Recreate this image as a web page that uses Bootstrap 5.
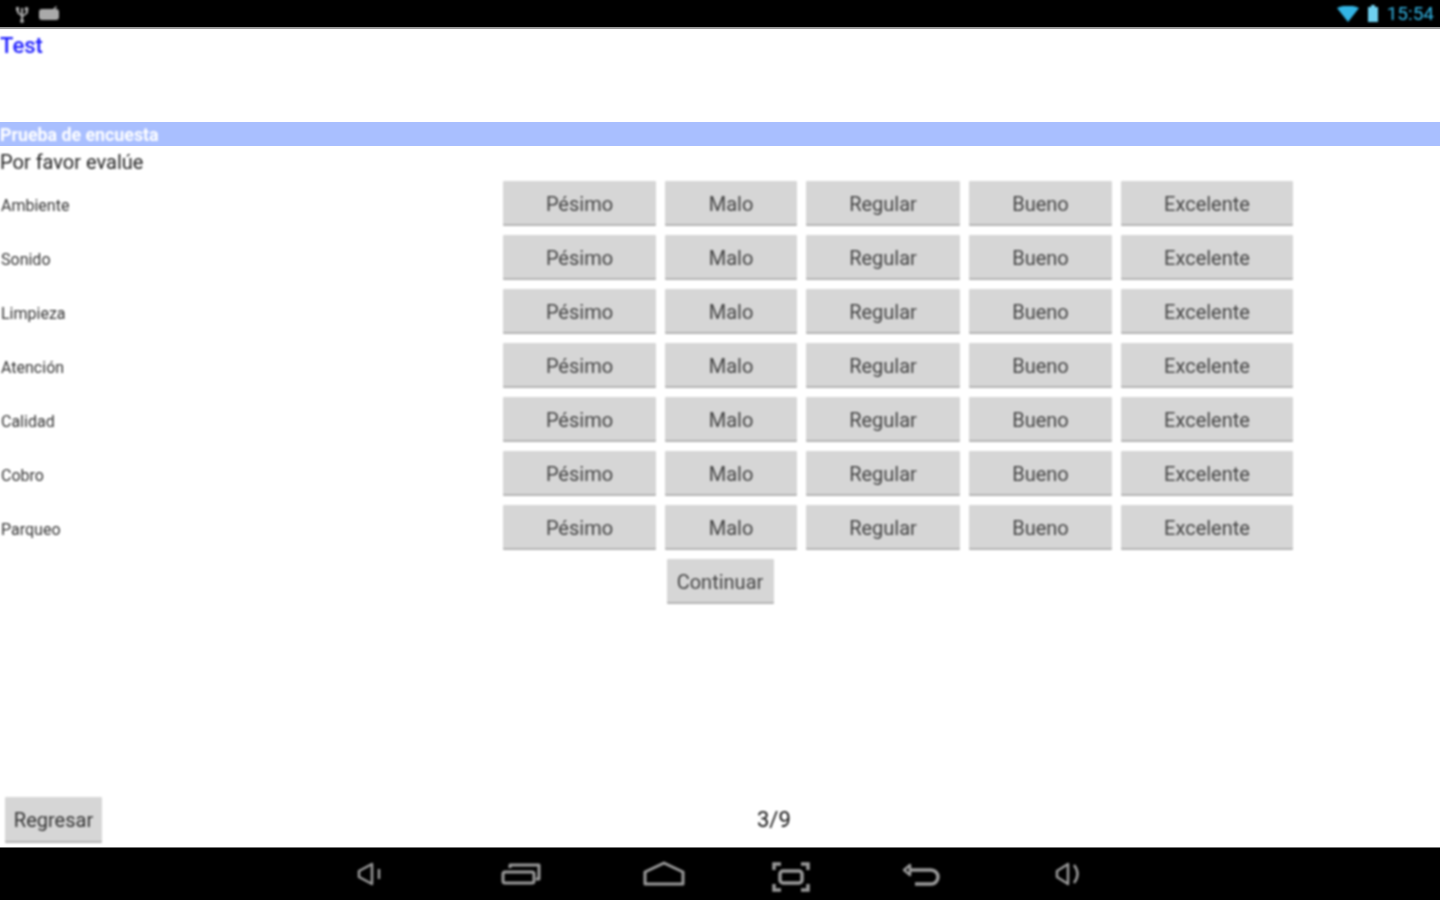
<!DOCTYPE html>
<html lang="es">
<head>
    <meta charset="UTF-8">
    <meta name="viewport" content="width=device-width, initial-scale=1.0">
    <title>Test</title>
    <link href="https://cdn.jsdelivr.net/npm/bootstrap@5.3.0/dist/css/bootstrap.min.css" rel="stylesheet">
    <style>
        html, body { height: 100%; }
        body {
            font-family: Roboto, "Liberation Sans", sans-serif;
            background-color: #fff;
            color: #333;
            overflow: hidden;
        }
        .tablet-screen { height: 900px; }
        /* captura reescalada: todo un poco borroso menos las barras */
        .soft-edge { filter: blur(0.8px); }
        .status-bar {
            height: 29px;
            background-color: #000;
            border-bottom: 2px solid #9a9a9a;
            padding: 0 6px 0 14px;
        }
        .status-time { color: #33b5e5; font-size: 19px; line-height: 1; }
        .app-title { color: #1f1fff; font-size: 22px; font-weight: 500; line-height: 24px; height: 93px; padding-top: 5px; }
        .survey-band {
            height: 24px;
            line-height: 25px;
            background-color: #a9bfff;
            color: #fff;
            font-size: 17.800px;
            font-weight: 700;
        }
        .survey-ask { font-size: 20px; line-height: 32px; height: 35px; color: #222; }
        .rate-grid {
            display: grid;
            grid-template-columns: 494px 153px 132px 154px 143px 172px;
            gap: 9px;
            align-items: center;
        }
        .rate-label { font-size: 16px; color: #333; padding: 5px 0 0 1px; }
        .droid-btn {
            height: 45px;
            padding: 0;
            background-color: #d6d6d6;
            border: 0;
            border-bottom: 2px solid #b4b4b4;
            border-radius: 1px;
            color: #444;
            font-size: 20px;
            line-height: 47px;
        }
        .continue-btn { width: 107px; margin-top: 9px; }
        .back-btn { width: 97px; height: 46px; margin-left: 5px; color: #333; }
        .page-count { margin-left: 655px; font-size: 22px; color: #111; line-height: 46px; }
        .page-foot { margin-bottom: 4px; }
        .nav-strip { height: 53px; background-color: #000; border-top: 1px solid #777; padding-top: 13px; }
        .nav-ico { flex-shrink: 0; }
        .ico-vol-down { margin-left: 356px; }
        .ico-recent { margin-left: 116px; }
        .ico-home { margin-left: 100px; }
        .ico-shot { margin-left: 85px; }
        .ico-back { margin-left: 90px; }
        .ico-vol-up { margin-left: 113px; }
    </style>
</head>
<body>
<div class="tablet-screen d-flex flex-column">

    <div class="status-bar d-flex align-items-center justify-content-between flex-shrink-0">
        <div class="soft-edge d-flex align-items-center gap-2">
            <svg width="16" height="18" viewBox="0 0 16 18" fill="#aaa">
                <rect x="7" y="3" width="2" height="14"/><circle cx="8" cy="16" r="2"/>
                <rect x="2" y="2" width="3" height="4"/><path d="M3 5h2v2l3 3v2L3 8z"/>
                <circle cx="12.500" cy="4" r="2"/><path d="M12 5h2v3l-5 4v-2l3-3z"/>
            </svg>
            <svg width="22" height="16" viewBox="0 0 22 16" fill="#aaa">
                <rect x="1" y="3" width="20" height="11" rx="3"/>
                <path d="M15 3l3-3 1 1-3 3z"/>
            </svg>
        </div>
        <div class="soft-edge d-flex align-items-center gap-2">
            <svg width="22" height="16" viewBox="0 0 22 16" fill="#33b5e5"><path d="M0 2Q11-3 22 2L11 16z"/></svg>
            <svg width="12" height="18" viewBox="0 0 12 18" fill="#6fd0f0"><rect x="4" y="0" width="4" height="3"/><rect x="1" y="2" width="10" height="15"/></svg>
            <span class="status-time">15:54</span>
        </div>
    </div>

    <div class="app-title soft-edge flex-shrink-0">Test</div>
    <div class="survey-band flex-shrink-0"><div class="soft-edge">Prueba de encuesta</div></div>
    <div class="survey-ask soft-edge flex-shrink-0">Por favor evalúe</div>

    <div id="rateGrid" class="rate-grid soft-edge"></div>

    <div class="soft-edge d-flex justify-content-center">
        <button type="button" class="droid-btn continue-btn">Continuar</button>
    </div>

    <div class="page-foot soft-edge mt-auto d-flex align-items-center">
        <button type="button" class="droid-btn back-btn">Regresar</button>
        <span class="page-count">3/9</span>
    </div>

    <div class="nav-strip d-flex align-items-start flex-shrink-0">
        <svg class="nav-ico soft-edge ico-vol-down" width="28" height="28" viewBox="0 0 28 28" fill="none" stroke="#9a9a9a" stroke-width="2.500" stroke-linejoin="round"><path d="M3 10v6l13 7V3z"/><path d="M23 8v10"/></svg>
        <svg class="nav-ico soft-edge ico-recent" width="42" height="28" viewBox="0 0 42 28" fill="none" stroke="#9a9a9a" stroke-width="3" stroke-linejoin="round"><rect x="3" y="11" width="31" height="11" rx="2"/><path d="M10 7V4h29v14h-3"/></svg>
        <svg class="nav-ico soft-edge ico-home" width="44" height="28" viewBox="0 0 44 28" fill="none" stroke="#9a9a9a" stroke-width="3" stroke-linejoin="round"><path d="M3 11L22 2l19 9v12H3z"/></svg>
        <svg class="nav-ico soft-edge ico-shot" width="40" height="32" viewBox="0 0 40 32" fill="none" stroke="#9a9a9a" stroke-width="3.500"><path d="M3 9V3h7M30 3h7v6M37 23v6h-7M10 29H3v-6"/><rect x="9" y="10" width="22" height="12" rx="3"/></svg>
        <svg class="nav-ico soft-edge ico-back" width="40" height="28" viewBox="0 0 40 28" fill="none" stroke="#9a9a9a" stroke-width="3.500" stroke-linejoin="round"><path d="M8 9h22a7 7 0 0 1 0 14H14"/><path d="M9 4L3 9l6 5z" stroke-width="2.500"/></svg>
        <svg class="nav-ico soft-edge ico-vol-up" width="28" height="28" viewBox="0 0 28 28" fill="none" stroke="#9a9a9a" stroke-width="2.500" stroke-linejoin="round"><path d="M3 10v6l11 7V3z"/><path d="M20 4q7 9 0 18"/></svg>
    </div>
</div>

<script src="https://cdn.jsdelivr.net/npm/bootstrap@5.3.0/dist/js/bootstrap.bundle.min.js"></script>
<script>
    // filas de la encuesta
    const temas = ['Ambiente', 'Sonido', 'Limpieza', 'Atención', 'Calidad', 'Cobro', 'Parqueo'];
    const notas = ['Pésimo', 'Malo', 'Regular', 'Bueno', 'Excelente'];
    let html = '';
    temas.forEach(function(tema) {
        html += '<div class="rate-label">' + tema + '</div>';
        notas.forEach(function(nota) {
            html += '<button type="button" class="droid-btn">' + nota + '</button>';
        });
    });
    document.getElementById('rateGrid').innerHTML = html;
</script>
</body>
</html>
